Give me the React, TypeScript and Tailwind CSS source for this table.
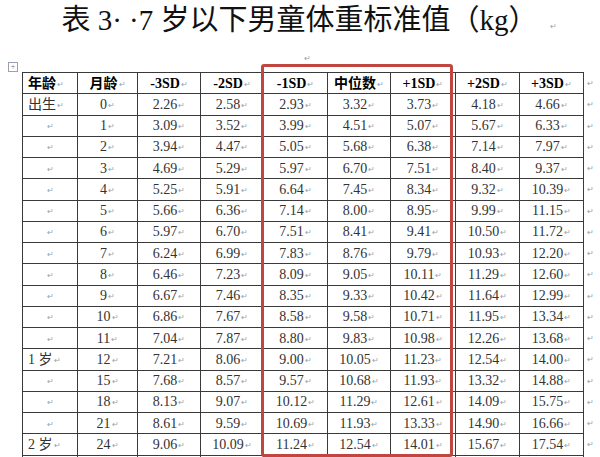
import React from 'react'

const serif = "font-['Liberation_Serif','Noto_Sans_CJK_SC',serif]"

const headers = ['年龄', '月龄', '-3SD', '-2SD', '-1SD', '中位数', '+1SD', '+2SD', '+3SD']

// 年龄, 月龄, -3SD ... +3SD
const rows: string[][] = [
  ['出生', '0', '2.26', '2.58', '2.93', '3.32', '3.73', '4.18', '4.66'],
  ['', '1', '3.09', '3.52', '3.99', '4.51', '5.07', '5.67', '6.33'],
  ['', '2', '3.94', '4.47', '5.05', '5.68', '6.38', '7.14', '7.97'],
  ['', '3', '4.69', '5.29', '5.97', '6.70', '7.51', '8.40', '9.37'],
  ['', '4', '5.25', '5.91', '6.64', '7.45', '8.34', '9.32', '10.39'],
  ['', '5', '5.66', '6.36', '7.14', '8.00', '8.95', '9.99', '11.15'],
  ['', '6', '5.97', '6.70', '7.51', '8.41', '9.41', '10.50', '11.72'],
  ['', '7', '6.24', '6.99', '7.83', '8.76', '9.79', '10.93', '12.20'],
  ['', '8', '6.46', '7.23', '8.09', '9.05', '10.11', '11.29', '12.60'],
  ['', '9', '6.67', '7.46', '8.35', '9.33', '10.42', '11.64', '12.99'],
  ['', '10', '6.86', '7.67', '8.58', '9.58', '10.71', '11.95', '13.34'],
  ['', '11', '7.04', '7.87', '8.80', '9.83', '10.98', '12.26', '13.68'],
  ['1 岁', '12', '7.21', '8.06', '9.00', '10.05', '11.23', '12.54', '14.00'],
  ['', '15', '7.68', '8.57', '9.57', '10.68', '11.93', '13.32', '14.88'],
  ['', '18', '8.13', '9.07', '10.12', '11.29', '12.61', '14.09', '15.75'],
  ['', '21', '8.61', '9.59', '10.69', '11.93', '13.33', '14.90', '16.66'],
  ['2 岁', '24', '9.06', '10.09', '11.24', '12.54', '14.01', '15.67', '17.54'],
]

function Mark({ className = '' }: { className?: string }) {
  return <span className={`text-[8px] leading-none text-gray-400 ${className}`}>↵</span>
}

function Cell({ text, first, head }: { text: string; first?: boolean; head?: boolean }) {
  const align = first && text ? 'justify-start pl-[5px]' : 'justify-center'
  return (
    <div className={`flex items-center ${align} border-r border-b border-[#3a3a3a]`}>
      <span className={head ? 'text-[14px] font-bold text-black' : 'text-[14px] text-[#333]'}>{text}</span>
      <Mark className="ml-[1px] mt-[3px]" />
    </div>
  )
}

export default function App() {
  return (
    <div className={`relative h-[457px] w-full overflow-hidden bg-white ${serif}`}>
      {/* title */}
      <div className="flex h-[40px] items-center justify-center pl-[18px]">
        <h1 className="text-[29px] leading-[38px] font-normal text-[#111]">
          表 3· ·7 岁以下男童体重标准值（kg）
        </h1>
        <Mark className="ml-[12px] mt-[14px]" />
      </div>
      <div className="flex h-[32px] items-center justify-center pl-[14px] pt-[6px]">
        <Mark />
      </div>

      {/* table */}
      <div className="relative flex pl-[22px]">
        <div className="absolute left-[8px] top-[-10px] flex h-[10px] w-[10px] items-center justify-center border border-gray-400 text-[8px] leading-none text-gray-500">
          +
        </div>
        <div className="grid grid-cols-[55px_60px_63px_63px_64px_63px_65px_64px_64px] auto-rows-[21.25px] border-t border-l border-[#3a3a3a]">
          {headers.map((h, i) => (
            <Cell key={h} text={h} head first={i === 0} />
          ))}
          {rows.map((r, ri) =>
            r.map((c, ci) => <Cell key={`${ri}-${ci}`} text={c} first={ci === 0} />)
          )}
          {headers.map((h) => (
            <div key={`e-${h}`} className="border-r border-b border-[#3a3a3a]" />
          ))}
        </div>
        <div className="flex flex-col pl-[3px]">
          {[...Array(rows.length + 1)].map((_, i) => (
            <div key={i} className="flex h-[21.25px] items-center">
              <Mark className="mt-[3px]" />
            </div>
          ))}
        </div>
      </div>

      {/* red highlight box */}
      <div className="absolute left-[261px] top-[64px] h-[393px] w-[192px] rounded-[3px] border-[3px] border-[#c0463f]" />
    </div>
  )
}
